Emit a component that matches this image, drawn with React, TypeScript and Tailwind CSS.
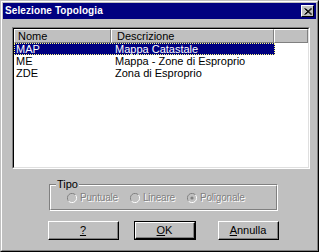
import React from "react";

const font = { fontFamily: '"Liberation Sans", Arial, sans-serif' };

const rows = [
  { code: "MAP", desc: "Mappa Catastale" },
  { code: "ME", desc: "Mappa - Zone di Esproprio" },
  { code: "ZDE", desc: "Zona di Esproprio" },
];

function Radio({ label, checked, className }: { label: string; checked?: boolean; className?: string }) {
  return (
    <div className={`flex items-center ${className ?? ""}`}>
      <svg width="10" height="10" viewBox="0 0 10 10" className="shrink-0">
        <path d="M8.5 2 A4.5 4.5 0 0 0 1.5 8" fill="none" stroke="#808080" strokeWidth="1" />
        <path d="M1.5 8 A4.5 4.5 0 0 0 8.5 2" fill="none" stroke="#ffffff" strokeWidth="1" />
        <circle cx="5" cy="5" r="3.5" fill="#c0c0c0" />
        {checked && <circle cx="5" cy="5" r="1.6" fill="#808080" />}
      </svg>
      <span className="ml-[3px] text-[10px] leading-[12px] tracking-[-0.2px] text-[#808080] [text-shadow:1px_1px_0_#ffffff]">
        {label}
      </span>
    </div>
  );
}

function Button({ children, isDefault, className }: { children: React.ReactNode; isDefault?: boolean; className?: string }) {
  return (
    <div className={`h-[19px] ${isDefault ? "border border-black" : ""} ${className ?? ""}`}>
      <div className="flex h-full items-center justify-center border-t border-l border-t-white border-l-white border-r border-b border-r-black border-b-black bg-[#c0c0c0]">
        <div className="flex h-full w-full items-center justify-center border-r border-b border-r-[#808080] border-b-[#808080] text-[11px] text-black">
          {children}
        </div>
      </div>
    </div>
  );
}

export default function App() {
  return (
    <div style={font} className="h-[252px] w-[319px] border-t border-l border-r border-b border-t-[#c0c0c0] border-l-[#c0c0c0] border-r-black border-b-black bg-[#c0c0c0]">
      <div className="flex h-full flex-col border-t border-l border-r border-b border-t-white border-l-white border-r-[#808080] border-b-[#808080] p-px">
        {/* title bar */}
        <div className="flex h-[16px] items-center justify-between bg-[#000080] pl-[2px] pr-[2px]">
          <span className="text-[10px] font-bold leading-none tracking-[0.1px] text-white">Selezione Topologia</span>
          <div className="flex h-[12px] w-[13px] items-center justify-center border-t border-l border-t-white border-l-white border-r border-b border-r-black border-b-black bg-[#c0c0c0]">
            <svg width="8" height="7" viewBox="0 0 8 7">
              <path d="M0.5 0.5 L7 6.5 M1.5 0.5 L8 6.5 M7 0.5 L0.5 6.5 M8 0.5 L1.5 6.5" stroke="black" strokeWidth="1" />
            </svg>
          </div>
        </div>

        {/* list view */}
        <div className="ml-[9px] mt-[8px] h-[142px] w-[298px] border-t border-l border-r border-b border-t-[#808080] border-l-[#808080] border-r-white border-b-white">
          <div className="h-full w-full border-t border-l border-r border-b border-t-black border-l-black border-r-[#dfdfdf] border-b-[#dfdfdf] bg-white">
            <div className="flex h-[14px] text-[11px] leading-none">
              <div className="flex w-[97px] items-center border-t border-l border-t-white border-l-white border-r border-b border-r-[#808080] border-b-[#808080] bg-[#c0c0c0] pl-[3px]">
                Nome
              </div>
              <div className="flex w-[163px] items-center border-t border-l border-t-white border-l-white border-r border-b border-r-[#808080] border-b-[#808080] bg-[#c0c0c0] pl-[5px]">
                Descrizione
              </div>
              <div className="flex-1 border-t border-l border-t-white border-l-white border-r border-b border-r-[#808080] border-b-[#808080] bg-[#c0c0c0]" />
            </div>
            {rows.map((r, i) => (
              <div
                key={r.code}
                className={`flex h-[12px] w-[261px] items-center text-[11px] leading-none ${
                  i === 0 ? "border border-dotted border-[#ffff7f] bg-[#000080] text-white" : "border border-transparent text-black"
                }`}
              >
                <span className="w-[100px] pl-px">{r.code}</span>
                <span>{r.desc}</span>
              </div>
            ))}
          </div>
        </div>

        {/* group box */}
        <div className="relative ml-[46px] mt-[15px] h-[27px] w-[229px] border-t border-l border-r border-b border-t-[#808080] border-l-[#808080] border-r-white border-b-white">
          <div className="h-full w-full border-t border-l border-r border-b border-t-white border-l-white border-r-[#808080] border-b-[#808080]">
            <span className="absolute -top-[7px] left-[6px] bg-[#c0c0c0] px-px text-[11px] leading-[12px] text-black">Tipo</span>
            <div className="flex pl-[16px] pt-[6px]">
              <Radio label="Puntuale" className="w-[63px]" />
              <Radio label="Lineare" className="w-[57px]" />
              <Radio label="Poligonale" checked />
            </div>
          </div>
        </div>

        {/* buttons */}
        <div className="ml-[45px] mt-[10px] flex">
          <Button className="w-[71px]">
            <span className="underline">?</span>
          </Button>
          <Button isDefault className="ml-[15px] w-[62px]">
            <span>
              <span className="underline">O</span>K
            </span>
          </Button>
          <Button className="ml-[22px] w-[61px]">
            <span>
              <span className="underline">A</span>nnulla
            </span>
          </Button>
        </div>
      </div>
    </div>
  );
}
